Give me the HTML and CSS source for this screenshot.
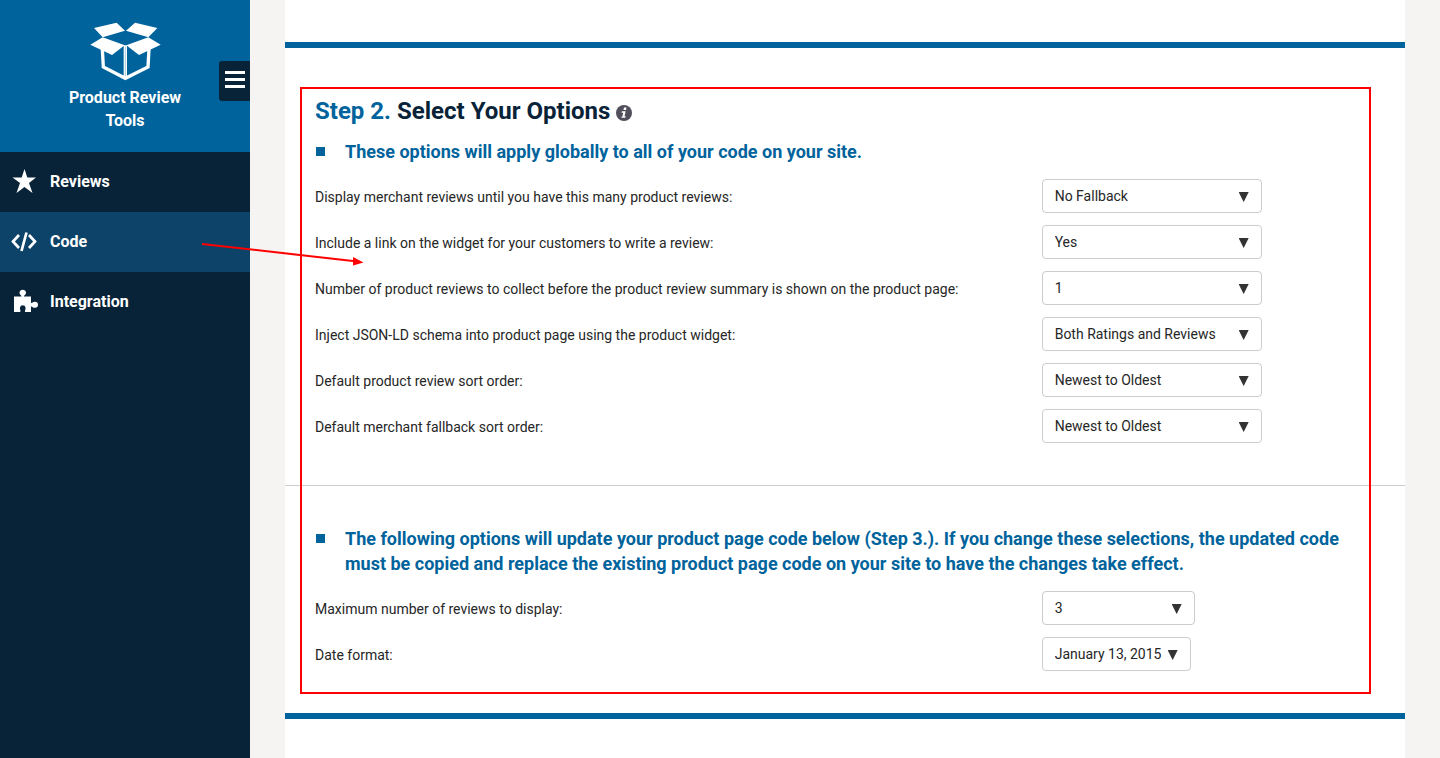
FILE: index.html
```html
<!DOCTYPE html>
<html lang="en">
<head>
<meta charset="utf-8">
<title>Product Review Tools</title>
<link rel="stylesheet" href="styles.css">
</head>
<body>
<div class="app">
  <aside class="sidebar">
    <div class="brand">
      <svg class="brand-icon" viewBox="90 36 213 177" aria-hidden="true">
        <g fill="#fff">
          <path d="M102 54 170 38 195 62 128 82Z"/>
          <path d="M292 54 225 38 198 62 265 82Z"/>
          <path d="M128 82 194 106 156 135 91 104Z"/>
          <path d="M265 82 199 106 237 135 302 104Z"/>
        </g>
        <path d="M127 117 130 171 196 205 264 171 267 117M196 106V206" fill="none" stroke="#fff" stroke-width="10"/>
        <path d="M196 110V198" stroke="#7fb1cd" stroke-width="2"/>
      </svg>
      <div class="brand-name">Product Review Tools</div>
      <button class="menu-toggle" type="button" aria-label="Toggle menu">
        <span class="bar"></span><span class="bar"></span><span class="bar"></span>
      </button>
    </div>
    <nav class="nav">
      <a class="nav-item" href="#reviews">
        <svg class="nav-icon" viewBox="0 0 28 28" aria-hidden="true"><path fill="#fff" d="M14.500 2 17.300 10.500H26L19 16 22.500 26 14.500 20 6.500 26 10 16 2.500 10.500H11.700Z"/></svg>
        <span>Reviews</span>
      </a>
      <a class="nav-item active" href="#code">
        <svg class="nav-icon" viewBox="0 0 28 28" aria-hidden="true"><path fill="none" stroke="#fff" stroke-width="2.700" d="M9 8 3 14.500 9 21M19 8 25 14.500 19 21M16.500 5.500 11.500 24"/></svg>
        <span>Code</span>
      </a>
      <a class="nav-item" href="#integration">
        <svg class="nav-icon" viewBox="0 0 28 28" aria-hidden="true"><path fill="#fff" d="M4 9.500H11.500C11.500 8 9.500 8 9.500 5.500A3.300 3.300 0 0 1 16 5.500C16 8 14 8 14 9.500H21V16C22.500 16.500 22.500 14.500 25 14.800A3 3 0 0 1 25 20.800C22.500 21 22.500 19 21 19.500V25H15.500C14 24.500 16 22.500 15.500 20.500A2.800 2.800 0 0 0 10 20.500C9.500 22.500 11.500 24 10 25H4Z"/></svg>
        <span>Integration</span>
      </a>
    </nav>
  </aside>

  <main class="main">
    <div class="panel">
      <section class="step">
        <h1 class="step-title"><span class="step-number">Step 2.</span> Select Your Options
          <svg class="info" viewBox="0 0 16 16" role="img" aria-label="Information"><circle cx="8" cy="8" r="8" fill="#524f5c"/><path fill="#fff" d="M8 2.500H10.500L10 5H7.500ZM5.800 6.200H9.700L8.500 11.200H9.700L9.300 12.800H5.300L5.700 11.400H6.400L7.200 7.700H5.500Z"/></svg>
        </h1>

        <div class="group">
          <h2 class="note">These options will apply globally to all of your code on your site.</h2>
          <div class="row">
            <label for="fallback">Display merchant reviews until you have this many product reviews:</label>
            <span class="select wide"><select id="fallback"><option>No Fallback</option></select></span>
          </div>
          <div class="row">
            <label for="link">Include a link on the widget for your customers to write a review:</label>
            <span class="select wide"><select id="link"><option>Yes</option></select></span>
          </div>
          <div class="row">
            <label for="count">Number of product reviews to collect before the product review summary is shown on the product page:</label>
            <span class="select wide"><select id="count"><option>1</option></select></span>
          </div>
          <div class="row">
            <label for="schema">Inject JSON-LD schema into product page using the product widget:</label>
            <span class="select wide"><select id="schema"><option>Both Ratings and Reviews</option></select></span>
          </div>
          <div class="row">
            <label for="sort">Default product review sort order:</label>
            <span class="select wide"><select id="sort"><option>Newest to Oldest</option></select></span>
          </div>
          <div class="row">
            <label for="merchant-sort">Default merchant fallback sort order:</label>
            <span class="select wide"><select id="merchant-sort"><option>Newest to Oldest</option></select></span>
          </div>
        </div>

        <hr class="divider">

        <div class="group">
          <h2 class="note">The following options will update your product page code below (Step 3.). If you change these selections, the updated code must be copied and replace the existing product page code on your site to have the changes take effect.</h2>
          <div class="row">
            <label for="max">Maximum number of reviews to display:</label>
            <span class="select medium"><select id="max"><option>3</option></select></span>
          </div>
          <div class="row">
            <label for="date">Date format:</label>
            <span class="select"><select id="date"><option>January 13, 2015</option></select></span>
          </div>
        </div>
        <div class="highlight"></div>
      </section>
    </div>
  </main>
</div>
<svg class="pointer" viewBox="0 0 164 26" aria-hidden="true"><path d="M2 3 153 20" stroke="#f00" stroke-width="2"/><path d="M153 16 163.500 21.500 153 24.500Z" fill="#f00"/></svg>
</body>
</html>
```
FILE: styles.css
```css
* { box-sizing: border-box; }

body {
  margin: 0;
  background: #f5f4f2;
  color: #262626;
  font-family: Roboto, sans-serif;
  font-size: 14px;
  line-height: 20px;
}

.app { display: flex; min-height: 100vh; }

.sidebar {
  flex: 0 0 250px;
  background: #082338;
  color: #fff;
}

.brand {
  position: relative;
  display: flex;
  flex-direction: column;
  align-items: center;
  gap: 5px;
  padding: 22px 50px 20px;
  background: #00639c;
}

.brand-icon { width: 71px; height: 59px; }

.brand-name {
  font-size: 16px;
  font-weight: 700;
  line-height: 23px;
  text-align: center;
}

.menu-toggle {
  position: absolute;
  top: 61px;
  right: 0;
  display: flex;
  flex-direction: column;
  justify-content: center;
  gap: 4px;
  width: 31px;
  height: 40px;
  padding: 0 5px 3px 6px;
  border: 0;
  border-radius: 3px 0 0 3px;
  background: #082338;
}

.bar { height: 3px; background: #fff; }

.nav-item {
  display: flex;
  align-items: center;
  gap: 12px;
  height: 60px;
  padding-left: 10px;
  color: #fff;
  font-size: 16px;
  font-weight: 700;
  text-decoration: none;
}

.nav-item.active { background: #0d4368; }
.nav-icon { width: 28px; height: 28px; margin-bottom: 2px; }

.main { flex: 1; padding: 0 35px; }

.panel {
  min-height: 100%;
  padding-top: 42px;
  background: #fff;
}

.step {
  position: relative;
  padding: 47px 0 42px;
  border-top: 6px solid #00639c;
  border-bottom: 6px solid #00639c;
}

.step-title {
  margin: 0 30px 12px;
  color: #082338;
  font-size: 24px;
  font-weight: 700;
  line-height: 32px;
}

.step-number { color: #00639c; }

.info { width: 16px; height: 16px; vertical-align: -2px; }

.group {
  display: flex;
  flex-direction: column;
  gap: 12px;
  padding-left: 30px;
}

.note {
  position: relative;
  margin: 0 30px 3px 0;
  padding-left: 30px;
  color: #00639c;
  font-size: 18px;
  font-weight: 700;
  line-height: 25px;
}

.note::before {
  content: "";
  position: absolute;
  top: 8px;
  left: 1px;
  width: 9px;
  height: 9px;
  background: #00639c;
}

.row {
  display: grid;
  grid-template-columns: 2fr 1fr;
  align-items: center;
}

.row label { padding-top: 2px; }

.select {
  display: inline-grid;
  align-items: center;
  justify-self: start;
}

.select.wide { width: 220px; }
.select.medium { width: 153px; }

.select select {
  grid-area: 1 / 1;
  width: 100%;
  height: 34px;
  padding: 0 28px 0 12px;
  border: 1px solid #ccc;
  border-radius: 4px;
  background: #fff;
  color: #262626;
  font: inherit;
  appearance: none;
}

.select::after {
  content: "";
  grid-area: 1 / 1;
  justify-self: end;
  width: 10px;
  height: 10px;
  margin: 2px 13px 0 0;
  background: #333;
  clip-path: polygon(0 0, 100% 0, 50% 100%);
  pointer-events: none;
}

.divider {
  margin: 42px 0 40px;
  border: 0;
  border-top: 1px solid #ccc;
}

.highlight {
  position: absolute;
  top: 39px;
  right: 34px;
  bottom: 19px;
  left: 15px;
  border: 2px solid #f00;
  pointer-events: none;
}

.pointer {
  position: absolute;
  top: 241px;
  left: 200px;
  width: 164px;
  height: 26px;
  pointer-events: none;
}
```
